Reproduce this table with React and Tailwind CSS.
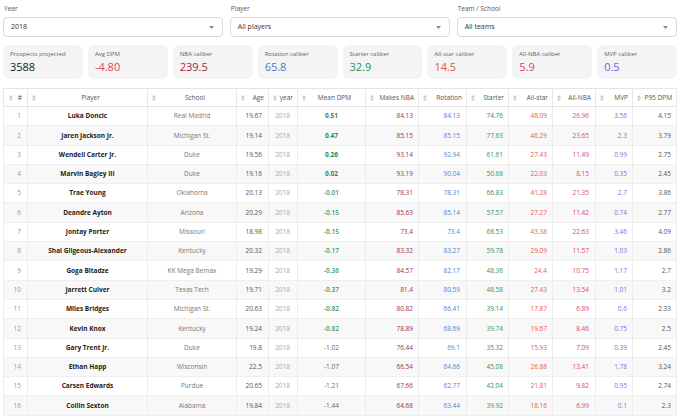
const rows = [
  [1, "Luka Doncic", "Real Madrid", "19.67", "0.51", "84.13", "84.13", "74.76", "48.09", "26.96", "3.56", "4.15"],
  [2, "Jaren Jackson Jr.", "Michigan St.", "19.14", "0.47", "85.15", "85.15", "77.63", "46.29", "23.65", "2.3", "3.79"],
  [3, "Wendell Carter Jr.", "Duke", "19.56", "0.26", "93.14", "92.94", "61.61", "27.43", "11.49", "0.99", "2.75"],
  [4, "Marvin Bagley III", "Duke", "19.16", "0.02", "93.19", "90.04", "50.68", "22.03", "8.15", "0.35", "2.45"],
  [5, "Trae Young", "Oklahoma", "20.13", "-0.01", "78.31", "78.31", "66.83", "41.28", "21.35", "2.7", "3.86"],
  [6, "Deandre Ayton", "Arizona", "20.29", "-0.15", "85.63", "85.14", "57.57", "27.27", "11.42", "0.74", "2.77"],
  [7, "Jontay Porter", "Missouri", "18.98", "-0.15", "73.4", "73.4", "68.53", "43.38", "22.63", "3.46", "4.09"],
  [8, "Shai Gilgeous-Alexander", "Kentucky", "20.32", "-0.17", "83.32", "83.27", "59.78", "29.09", "11.57", "1.03", "2.86"],
  [9, "Goga Bitadze", "KK Mega Bemax", "19.29", "-0.36", "84.57", "82.17", "48.36", "24.4", "10.75", "1.17", "2.7"],
  [10, "Jarrett Culver", "Texas Tech", "19.71", "-0.37", "81.4", "80.59", "48.58", "27.43", "13.54", "1.01", "3.2"],
  [11, "Miles Bridges", "Michigan St.", "20.63", "-0.82", "80.82", "66.41", "39.14", "17.87", "6.89", "0.6", "2.33"],
  [12, "Kevin Knox", "Kentucky", "19.24", "-0.82", "78.89", "68.69", "39.74", "19.67", "8.46", "0.75", "2.5"],
  [13, "Gary Trent Jr.", "Duke", "19.8", "-1.02", "76.44", "69.1", "35.32", "15.93", "7.09", "0.39", "2.45"],
  [14, "Ethan Happ", "Wisconsin", "22.5", "-1.07", "66.54", "64.66", "45.08", "26.88", "13.41", "1.78", "3.24"],
  [15, "Carsen Edwards", "Purdue", "20.65", "-1.21", "67.66", "62.77", "42.04", "21.81", "9.82", "0.95", "2.74"],
  [16, "Collin Sexton", "Alabama", "19.84", "-1.44", "64.68", "63.44", "39.92", "18.16", "6.99", "0.1", "2.3"],
];

const stats = [
  { label: "Prospects projected", value: "3588", color: "text-[#1a1a1a]" },
  { label: "Avg DPM", value: "-4.80", color: "text-[#e0475a]" },
  { label: "NBA caliber", value: "239.5", color: "text-[#a3243d]" },
  { label: "Rotation caliber", value: "65.8", color: "text-[#3f7fd0]" },
  { label: "Starter caliber", value: "32.9", color: "text-[#239463]" },
  { label: "All-star caliber", value: "14.5", color: "text-[#e4583b]" },
  { label: "All-NBA caliber", value: "5.9", color: "text-[#d8436c]" },
  { label: "MVP caliber", value: "0.5", color: "text-[#7163dd]" },
];

const SortIcon = () => (
  <svg width="4" height="6" viewBox="0 0 4 6" className="shrink-0">
    <path d="M2 0 L4 2.4 L0 2.4 Z M0 3.6 L4 3.6 L2 6 Z" fill="#c4c4c4" />
  </svg>
);

const Select = ({ label, value }) => (
  <div className="flex flex-col">
    <span className="text-[6.5px] text-[#555] h-[16px] leading-[16px] pl-[1px]">{label}</span>
    <div className="h-[20px] border border-[#dadada] rounded-[4px] bg-white flex items-center justify-between pl-[7px] pr-[8px]">
      <span className="text-[7px] text-[#333]">{value}</span>
      <svg width="5" height="3" viewBox="0 0 5 3">
        <path d="M0 0 L5 0 L2.5 3 Z" fill="#888" />
      </svg>
    </div>
  </div>
);

function dpmClass(v) {
  const n = parseFloat(v);
  if (n >= 0) return "font-bold text-[#1f8a58]";
  if (n > -1) return "font-semibold text-[#3c9a6c]";
  return "text-[#6a6a6a]";
}

const headers = [
  { label: "Player", align: "justify-center" },
  { label: "School", align: "justify-center" },
  { label: "Age", align: "justify-end" },
  { label: "year", align: "justify-end" },
  { label: "Mean DPM", align: "justify-center" },
  { label: "Makes NBA", align: "justify-end" },
  { label: "Rotation", align: "justify-end" },
  { label: "Starter", align: "justify-end" },
  { label: "All-star", align: "justify-end" },
  { label: "All-NBA", align: "justify-end" },
  { label: "MVP", align: "justify-end" },
  { label: "P95 DPM", align: "justify-end" },
];

export default function App() {
  return (
    <div className="w-[680px] h-[417px] overflow-hidden bg-white px-[3px] pt-[1px] font-['Open_Sans',sans-serif]">
      <div className="grid grid-cols-3 gap-[6.5px]">
        <Select label="Year" value="2018" />
        <Select label="Player" value="All players" />
        <Select label="Team / School" value="All teams" />
      </div>

      <div className="grid grid-cols-8 gap-[5px] mt-[8px]">
        {stats.map((s) => (
          <div key={s.label} className="h-[34px] rounded-[6px] bg-[#f4f4f4] pl-[7px] pt-[5px]">
            <div className="text-[6px] leading-[9px] text-[#666]">{s.label}</div>
            <div className={`text-[11px] leading-[15px] ${s.color}`}>{s.value}</div>
          </div>
        ))}
      </div>

      <table className="w-full table-fixed border-collapse mt-[9px] text-[6.5px]">
        <colgroup>
          <col className="w-[24px]" />
          <col className="w-[120px]" />
          <col className="w-[89px]" />
          <col className="w-[32px]" />
          <col className="w-[29px]" />
          <col className="w-[68px]" />
          <col className="w-[53px]" />
          <col className="w-[48px]" />
          <col className="w-[42px]" />
          <col className="w-[44px]" />
          <col className="w-[43px]" />
          <col className="w-[37px]" />
          <col />
        </colgroup>
        <thead>
          <tr className="h-[18px] border-t border-b border-[#e4e4e4]">
            <th className="border-l border-[#e8e8e8] font-normal px-[5px]">
              <div className="flex items-center justify-between text-[#555]">
                <SortIcon />
                <span>#</span>
              </div>
            </th>
            {headers.map((h) => (
              <th key={h.label} className="border-l border-[#e8e8e8] font-normal px-[4px] last:border-r">
                <div className={`flex items-center gap-[2px] whitespace-nowrap text-[#555] ${h.align}`}>
                  <SortIcon />
                  <span className={h.align === "justify-center" ? "flex-1 text-center" : "flex-1 text-right"}>
                    {h.label}
                  </span>
                </div>
              </th>
            ))}
          </tr>
        </thead>
        <tbody>
          {rows.map((r) => (
            <tr key={r[0]} className={`h-[19.3px] border-b border-[#efefef] ${r[0] % 2 === 0 ? "bg-[#f8f8f8]" : "bg-white"}`}>
              <td className="border-l border-[#ececec] text-right pr-[6px] text-[#999]">{r[0]}</td>
              <td className="border-l border-[#ececec] text-center font-bold text-[#222] whitespace-nowrap">{r[1]}</td>
              <td className="border-l border-[#ececec] text-center text-[#777]">{r[2]}</td>
              <td className="border-l border-[#ececec] text-right pr-[6px] text-[#555]">{r[3]}</td>
              <td className="border-l border-[#ececec] text-right pr-[7px] text-[#aaa]">2018</td>
              <td className={`border-l border-[#ececec] text-center ${dpmClass(r[4])}`}>{r[4]}</td>
              <td className="border-l border-[#ececec] text-right pr-[5px] text-[#9e3347]">{r[5]}</td>
              <td className="border-l border-[#ececec] text-right pr-[6px] text-[#4f86cf]">{r[6]}</td>
              <td className="border-l border-[#ececec] text-right pr-[5px] text-[#2f9566]">{r[7]}</td>
              <td className="border-l border-[#ececec] text-right pr-[5px] text-[#e2613f]">{r[8]}</td>
              <td className="border-l border-[#ececec] text-right pr-[6px] text-[#d24d73]">{r[9]}</td>
              <td className="border-l border-[#ececec] text-right pr-[5px] text-[#7f72dc]">{r[10]}</td>
              <td className="border-l border-r border-[#ececec] text-right pr-[5px] text-[#555]">{r[11]}</td>
            </tr>
          ))}
        </tbody>
      </table>
    </div>
  );
}
